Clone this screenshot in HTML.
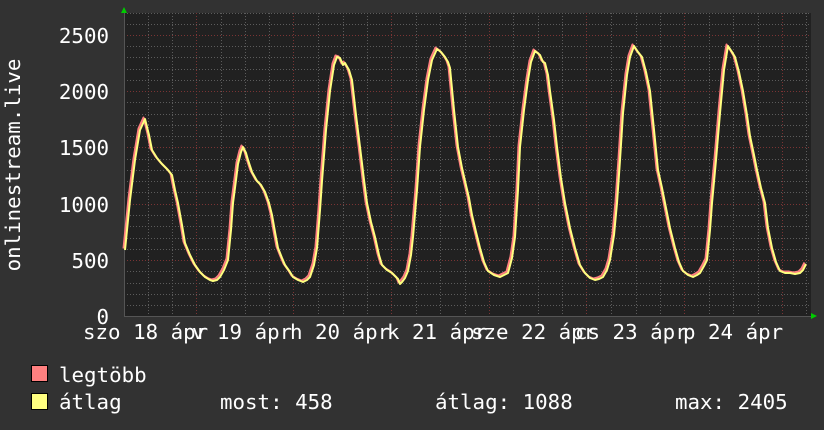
<!DOCTYPE html>
<html><head><meta charset="utf-8"><style>
html,body{margin:0;padding:0;background:#333;}
svg{display:block}
text{font-family:"DejaVu Sans Mono","Liberation Mono",monospace;font-size:20.8px;fill:#fff}
</style></head><body>
<svg width="824" height="430" viewBox="0 0 824 430" xmlns="http://www.w3.org/2000/svg">
<rect width="824" height="430" fill="#323232"/>
<rect x="124" y="13" width="687" height="304" fill="#212121"/>
<g stroke="#5c5c5c" stroke-width="1" stroke-dasharray="1,2" shape-rendering="crispEdges">
<path d="M124.5 13V317M148.5 13V317M172.5 13V317M221.5 13V317M245.5 13V317M269.5 13V317M318.5 13V317M343.5 13V317M367.5 13V317M416.5 13V317M440.5 13V317M465.5 13V317M513.5 13V317M538.5 13V317M562.5 13V317M611.5 13V317M636.5 13V317M660.5 13V317M709.5 13V317M733.5 13V317M758.5 13V317M806.5 13V317"/>
<path d="M124 305.5H811M124 294.5H811M124 283.5H811M124 271.5H811M124 249.5H811M124 238.5H811M124 226.5H811M124 215.5H811M124 192.5H811M124 181.5H811M124 170.5H811M124 159.5H811M124 136.5H811M124 125.5H811M124 114.5H811M124 102.5H811M124 80.5H811M124 69.5H811M124 57.5H811M124 46.5H811M124 24.5H811M124 13.5H811"/>
</g>
<g stroke="#7a3434" stroke-width="1" stroke-dasharray="1,2" shape-rendering="crispEdges">
<path d="M196.5 13V317M293.5 13V317M391.5 13V317M489.5 13V317M586.5 13V317M684.5 13V317M782.5 13V317"/>
<path d="M124 260.5H811M124 204.5H811M124 147.5H811M124 91.5H811M124 35.5H811"/>
</g>
<path d="M124 316.5H811M124.5 13V317" stroke="#555" stroke-width="1"/>
<polygon points="121,13 127,13 124,7" fill="#0c0"/>
<polygon points="811,313 811,319 817,316" fill="#0c0"/>
<g fill="none" stroke-linejoin="round" stroke-width="2">
<polyline stroke="#ff8080" transform="translate(-1.5,-1.5)" points="125,250 130,200 135,160 140,130 145,119 149,135 152,150 157,158 162,164 168,170 172,175 175,190 178,203 182,225 185,243 190,255 195,265 200,272 205,277 210,280 213,281 217,280 220,277 224,270 228,260 231,230 233,203 236,180 238,164 241,152 243,147 246,153 248,160 252,172 257,181 261,185 265,192 269,203 272,215 275,232 278,248 282,258 285,265 290,272 293,277 298,280 303,282 307,280 310,277 314,265 317,248 320,210 322,181 326,130 330,91 334,65 337,57 340,58 343,65 345,63 349,70 352,80 356,115 360,147 364,180 367,203 371,222 375,237 379,255 382,265 387,270 392,273 395,276 398,279 400,284 402,282 405,278 408,271 411,255 413,237 417,190 420,147 424,110 428,80 432,60 437,49 441,52 445,57 448,62 450,68 454,110 458,147 462,168 465,181 469,198 472,215 476,232 480,248 484,262 488,271 494,275 500,277 504,275 508,273 512,258 515,237 518,190 520,147 524,110 528,80 531,62 535,51 540,55 543,62 545,63 548,75 550,91 554,120 557,147 561,178 565,203 570,228 575,248 580,265 585,273 590,278 595,280 599,279 603,277 607,270 610,260 614,235 617,203 620,160 623,113 627,75 630,57 634,46 638,52 642,57 646,72 650,91 654,130 658,170 662,188 665,203 670,228 675,248 679,262 683,271 688,275 693,277 697,275 700,273 704,266 707,260 710,230 712,203 716,160 720,113 724,70 728,46 732,52 735,57 739,72 743,91 747,115 750,136 754,155 757,170 761,188 765,203 768,228 772,248 776,262 780,271 785,273 790,273 795,274 800,273 803,270 806,264"/>
<polyline stroke="#ffff80" points="125,250 130,200 135,160 140,130 145,119 149,135 152,150 157,158 162,164 168,170 172,175 175,190 178,203 182,225 185,243 190,255 195,265 200,272 205,277 210,280 213,281 217,280 220,277 224,270 228,260 231,230 233,203 236,180 238,164 241,152 243,147 246,153 248,160 252,172 257,181 261,185 265,192 269,203 272,215 275,232 278,248 282,258 285,265 290,272 293,277 298,280 303,282 307,280 310,277 314,265 317,248 320,210 322,181 326,130 330,91 334,65 337,57 340,58 343,65 345,63 349,70 352,80 356,115 360,147 364,180 367,203 371,222 375,237 379,255 382,265 387,270 392,273 395,276 398,279 400,284 402,282 405,278 408,271 411,255 413,237 417,190 420,147 424,110 428,80 432,60 437,49 441,52 445,57 448,62 450,68 454,110 458,147 462,168 465,181 469,198 472,215 476,232 480,248 484,262 488,271 494,275 500,277 504,275 508,273 512,258 515,237 518,190 520,147 524,110 528,80 531,62 535,51 540,55 543,62 545,63 548,75 550,91 554,120 557,147 561,178 565,203 570,228 575,248 580,265 585,273 590,278 595,280 599,279 603,277 607,270 610,260 614,235 617,203 620,160 623,113 627,75 630,57 634,46 638,52 642,57 646,72 650,91 654,130 658,170 662,188 665,203 670,228 675,248 679,262 683,271 688,275 693,277 697,275 700,273 704,266 707,260 710,230 712,203 716,160 720,113 724,70 728,46 732,52 735,57 739,72 743,91 747,115 750,136 754,155 757,170 761,188 765,203 768,228 772,248 776,262 780,271 785,273 790,273 795,274 800,273 803,270 806,264"/>
</g>
<g text-anchor="end">
<text x="109" y="43">2500</text>
<text x="109" y="99">2000</text>
<text x="109" y="155">1500</text>
<text x="109" y="212">1000</text>
<text x="109" y="268">500</text>
<text x="109" y="324">0</text>
</g>
<text transform="translate(20,165) rotate(-90)" text-anchor="middle">onlinestream.live</text>
<text x="83" y="339">szo 18 ápr</text>
<text x="192" y="339">v 19 ápr</text>
<text x="290" y="339">h 20 ápr</text>
<text x="387" y="339">k 21 ápr</text>
<text x="471" y="339">sze 22 ápr</text>
<text x="575" y="339">cs 23 ápr</text>
<text x="683" y="339">p 24 ápr</text>
<rect x="31.5" y="365.5" width="16" height="16" fill="#ff8080" stroke="#000"/>
<rect x="31.5" y="393.5" width="16" height="16" fill="#ffff80" stroke="#000"/>
<text x="59" y="382">legtöbb</text>
<text x="59" y="409">átlag</text>
<text x="220" y="409">most: 458</text>
<text x="435" y="409">átlag: 1088</text>
<text x="675" y="409">max: 2405</text>
</svg>
</body></html>
